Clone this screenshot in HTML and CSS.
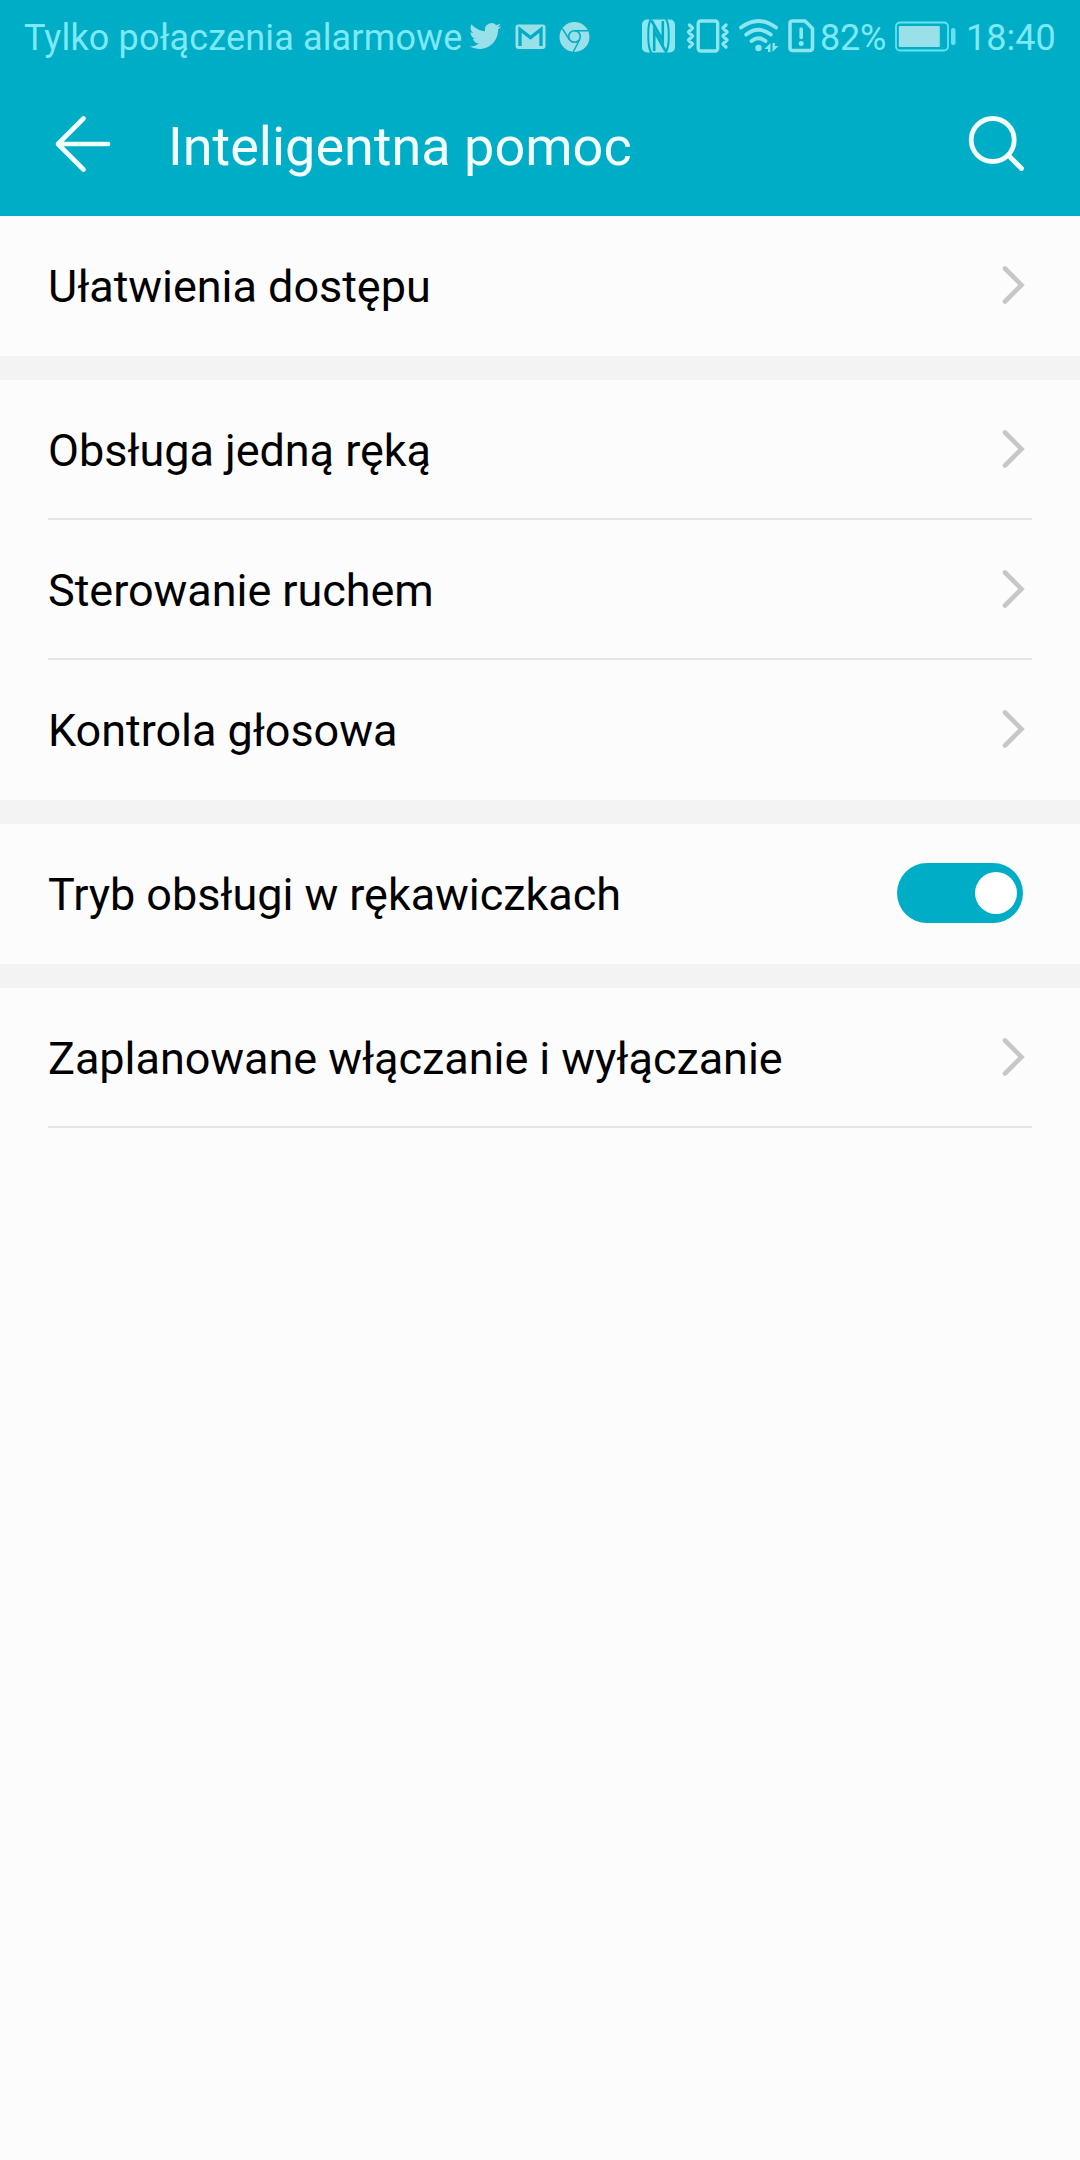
FILE: index.html
```html
<!DOCTYPE html>
<html lang="pl">
<head>
<meta charset="utf-8">
<title>Inteligentna pomoc</title>
<link rel="stylesheet" href="styles.css">
</head>
<body>
<svg class="defs" width="0" height="0">
  <symbol id="chevron" viewBox="0 0 24 40"><path d="M4 3.500 20.500 20 4 36.500" fill="none" stroke="currentColor" stroke-width="4.600" stroke-linecap="round"/></symbol>
</svg>
<header class="header">
  <div class="status">
    <span class="carrier">Tylko połączenia alarmowe</span>
    <div class="notifications">
      <svg width="33" height="34" viewBox="0 0 33 34"><path fill="currentColor" transform="translate(-1.200 .2) scale(1.42)" d="M23.64 4.94c-.83.37-1.72.62-2.66.73.96-.57 1.69-1.48 2.04-2.56-.9.53-1.89.92-2.95 1.13A4.64 4.64 0 0 0 12.17 8.47C8.31 8.28 4.89 6.43 2.6 3.62c-.4.68-.63 1.48-.63 2.33 0 1.61.82 3.03 2.06 3.86-.76-.02-1.48-.23-2.1-.58v.06c0 2.25 1.6 4.12 3.72 4.55-.68.18-1.4.2-2.1.08.6 1.84 2.31 3.18 4.34 3.22A9.3 9.3 0 0 1 1 19.06 13.13 13.13 0 0 0 8.11 21c8.54 0 13.2-7.07 13.2-13.2v-.6c.91-.65 1.7-1.47 2.33-2.26z"/></svg>
      <svg width="31" height="34" viewBox="0 0 31 34"><rect x=".5" y="5.500" width="30" height="24.500" rx="3" fill="currentColor"/><path d="M5 27V10.500L15.500 18.500 26 10.500V27" fill="none" stroke="#00adc6" stroke-width="3.400"/></svg>
      <svg width="31" height="34" viewBox="0 0 31 34"><circle cx="15.500" cy="18" r="15" fill="currentColor"/><g fill="none" stroke="#00adc6" stroke-width="1.500"><circle cx="15.500" cy="17.500" r="5.800"/><path d="M15.500 11.700H29M10.300 20.500 3.300 9.600M20.700 20.500 14.200 33"/></g></svg>
    </div>
    <div class="system">
      <svg class="nfc" width="33" height="34" viewBox="0 0 33 34"><rect width="33" height="33" y=".5" rx="5" fill="currentColor"/><g fill="none" stroke="#00adc6" stroke-width="2"><path d="M9 0Q6 5 6.300 16Q6 29 9.500 34M24 0Q27 5 26.700 17Q27 29 23.500 34"/><path stroke-width="2.600" d="M9.500 1.500 20.800 21.500V2M12.200 32V12L23.500 32"/></g></svg>
      <svg class="vibrate" width="44" height="34" viewBox="0 0 44 34"><g fill="none" stroke="currentColor" stroke-width="3.400" stroke-linecap="round" stroke-linejoin="round"><rect x="12.200" y="2" width="19.500" height="30" rx="2.500"/><path d="M3.500 6 6.500 9 2.500 13 6.500 17 2.500 21 6.500 25 3.500 28M40 6 37 9 41 13 37 17 41 21 37 25 40 28"/></g></svg>
      <svg class="wifi" width="40" height="34" viewBox="0 0 40 34"><g fill="none" stroke="currentColor" stroke-width="3.800" stroke-linecap="round"><path d="M2 8.500Q19.500-4.500 37 8.500M7.200 15.500Q19.500 6 31.800 15.500M12.500 22Q19.500 16.500 26.500 22"/></g><circle cx="19.500" cy="29" r="3.200" fill="currentColor"/><path fill="currentColor" d="M31.500 24V33H29V30H25.500ZM33.500 33V24H36V27H39.500Z"/></svg>
      <svg class="sim" width="27" height="34" viewBox="0 0 27 34"><path d="M4.500 2H17L24.500 9.500V28.500Q24.500 31.500 21.500 31.500H5Q2 31.500 2 28.500V4.500Q2 2 4.500 2Z" fill="none" stroke="currentColor" stroke-width="3.600" stroke-linejoin="round"/><path d="M13.200 10V18.500" stroke="currentColor" stroke-width="3.600" stroke-linecap="round"/><circle cx="13.200" cy="24.500" r="2.500" fill="currentColor"/></svg>
      <span class="percent">82%</span>
      <svg class="battery" width="62" height="34" viewBox="0 0 62 34"><rect x="1" y="3.500" width="52" height="28" rx="4" fill="none" stroke="#63e3f2" stroke-width="1.800"/><rect x="3.800" y="7" width="41" height="21" rx="1" fill="currentColor"/><rect x="56" y="9" width="4.500" height="17" rx="2" fill="#63e3f2"/></svg>
      <time class="clock">18:40</time>
    </div>
  </div>
  <div class="toolbar">
    <svg class="back" width="58" height="58" viewBox="0 0 58 58"><path d="M29.500 3.500 4 29 29.500 54.500M4 29H54" fill="none" stroke="currentColor" stroke-width="4.600" stroke-linecap="round" stroke-linejoin="round"/></svg>
    <h1 class="title">Inteligentna pomoc</h1>
    <svg class="search" width="58" height="58" viewBox="0 0 58 58"><g fill="none" stroke="currentColor" stroke-width="4.800" stroke-linecap="round"><circle cx="24.700" cy="25" r="21.500"/><path d="M40.500 40.500 53.500 53.500"/></g></svg>
  </div>
</header>
<main class="settings">
  <section class="group">
    <div class="row"><span class="label">Ułatwienia dostępu</span><svg class="chevron"><use href="#chevron"/></svg></div>
  </section>
  <section class="group">
    <div class="row divided"><span class="label">Obsługa jedną ręką</span><svg class="chevron"><use href="#chevron"/></svg></div>
    <div class="row divided"><span class="label">Sterowanie ruchem</span><svg class="chevron"><use href="#chevron"/></svg></div>
    <div class="row"><span class="label">Kontrola głosowa</span><svg class="chevron"><use href="#chevron"/></svg></div>
  </section>
  <section class="group">
    <div class="row"><span class="label">Tryb obsługi w rękawiczkach</span><span class="switch" role="switch" aria-checked="true"><span class="knob"></span></span></div>
  </section>
  <section class="group">
    <div class="row divided"><span class="label">Zaplanowane włączanie i wyłączanie</span><svg class="chevron"><use href="#chevron"/></svg></div>
  </section>
</main>
</body>
</html>
```
FILE: styles.css
```css
* { box-sizing: border-box; }

body {
  margin: 0;
  min-height: 2160px;
  display: flex;
  flex-direction: column;
  background: #fcfcfc;
  color: #000;
  font-family: Roboto, "Liberation Sans", sans-serif;
}

svg { display: block; flex: none; }
.defs { display: none; }

.header {
  height: 216px;
  background: #00adc6;
  color: #f4ffff;
}

.status {
  height: 72px;
  display: flex;
  align-items: center;
  padding: 0 24px;
  color: #99e0e9;
  font-size: 36px;
  line-height: 44px;
  white-space: nowrap;
}

.carrier { width: 445px; padding-top: 3px; color: #7de9f6; letter-spacing: 0.15px; }
.notifications { display: flex; gap: 13px; }
.system { display: flex; align-items: center; margin-left: auto; color: #8be6f0; }
.vibrate { margin-left: 11px; }
.wifi { margin-left: 9px; }
.sim { margin-left: 9px; }
.percent { width: 69px; margin-left: 5px; padding-top: 3px; color: #7de9f6; letter-spacing: -0.2px; }
.battery { margin-left: 6px; color: #99e0e9; }
.clock { width: 90px; margin-left: 9px; padding-top: 3px; color: #7de9f6; }

.toolbar {
  height: 144px;
  display: flex;
  align-items: center;
  padding: 0 54px;
}

.title {
  flex: 1;
  margin: 0 0 0 56px;
  padding-top: 5px;
  font-size: 54px;
  line-height: 64px;
  font-weight: 400;
}

.settings {
  display: flex;
  flex-direction: column;
  gap: 24px;
  background: #f3f3f3;
}

.group { padding: 0 48px; background: #fcfcfc; }

.row {
  height: 140px;
  display: flex;
  align-items: center;
  justify-content: space-between;
  padding-right: 9px;
  border-bottom: 2px solid transparent;
}

.divided { border-bottom-color: #e5e5e5; }
.label { padding-top: 3px; font-size: 45px; line-height: 54px; letter-spacing: -0.05px; }
.chevron { width: 24px; height: 40px; margin: 0 -2px 1px 0; color: #c7c7c7; }

.switch {
  width: 126px;
  height: 60px;
  display: flex;
  align-items: center;
  justify-content: flex-end;
  padding-right: 6px;
  border-radius: 30px;
  background: #00adc6;
}

.knob { width: 42px; height: 42px; border-radius: 50%; background: #fff; }
```
